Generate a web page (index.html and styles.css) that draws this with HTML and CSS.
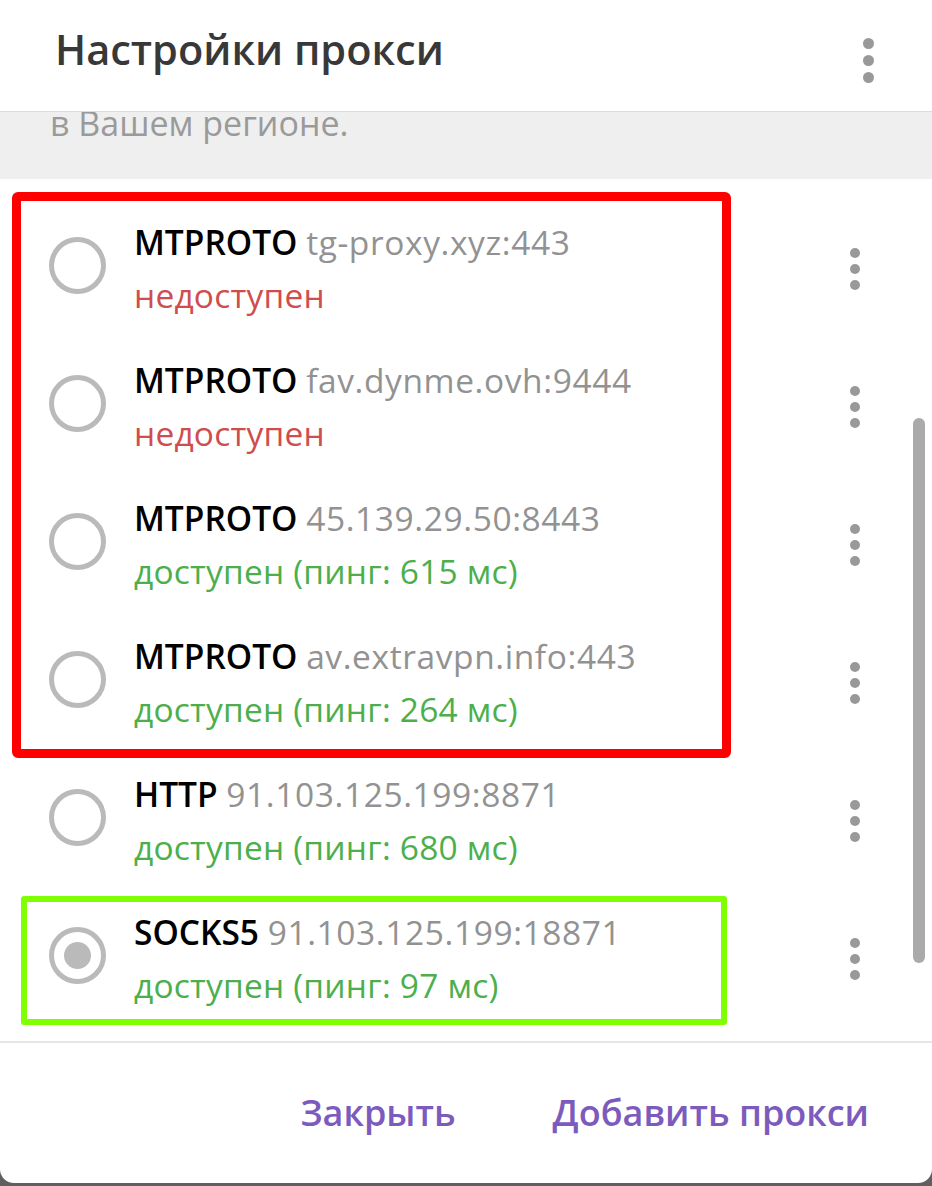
FILE: index.html
```html
<!DOCTYPE html>
<html lang="ru">
<head>
<meta charset="utf-8">
<title>Настройки прокси</title>
<link rel="stylesheet" href="styles.css">
</head>
<body>
<div class="dialog">
  <header class="header">
    <h1 class="title">Настройки прокси</h1>
    <div class="kebab kebab-header"><span></span><span></span><span></span></div>
  </header>
  <div class="note"><p>в Вашем регионе.</p></div>
  <div class="list">
    <div class="row">
      <div class="radio"></div>
      <div class="info">
        <div class="line1"><b>MTPROTO</b> <span class="addr">tg-proxy.xyz:443</span></div>
        <div class="status bad">недоступен</div>
      </div>
      <div class="kebab"><span></span><span></span><span></span></div>
    </div>
    <div class="row">
      <div class="radio"></div>
      <div class="info">
        <div class="line1"><b>MTPROTO</b> <span class="addr">fav.dynme.ovh:9444</span></div>
        <div class="status bad">недоступен</div>
      </div>
      <div class="kebab"><span></span><span></span><span></span></div>
    </div>
    <div class="row">
      <div class="radio"></div>
      <div class="info">
        <div class="line1"><b>MTPROTO</b> <span class="addr">45.139.29.50:8443</span></div>
        <div class="status ok">доступен (пинг: 615 мс)</div>
      </div>
      <div class="kebab"><span></span><span></span><span></span></div>
    </div>
    <div class="row">
      <div class="radio"></div>
      <div class="info">
        <div class="line1"><b>MTPROTO</b> <span class="addr">av.extravpn.info:443</span></div>
        <div class="status ok">доступен (пинг: 264 мс)</div>
      </div>
      <div class="kebab"><span></span><span></span><span></span></div>
    </div>
    <div class="row">
      <div class="radio"></div>
      <div class="info">
        <div class="line1"><b>HTTP</b> <span class="addr">91.103.125.199:8871</span></div>
        <div class="status ok">доступен (пинг: 680 мс)</div>
      </div>
      <div class="kebab"><span></span><span></span><span></span></div>
    </div>
    <div class="row">
      <div class="radio checked"></div>
      <div class="info">
        <div class="line1"><b>SOCKS5</b> <span class="addr">91.103.125.199:18871</span></div>
        <div class="status ok">доступен (пинг: 97 мс)</div>
      </div>
      <div class="kebab"><span></span><span></span><span></span></div>
    </div>
    <div class="mark mark-red"></div>
    <div class="mark mark-green"></div>
    <div class="scrollbar"></div>
  </div>
  <footer class="footer">
    <span class="btn">Закрыть</span>
    <span class="btn">Добавить прокси</span>
  </footer>
</div>
</body>
</html>
```
FILE: styles.css
```css
* { box-sizing: border-box; }
html, body {
  margin: 0;
  padding: 0;
}
body {
  width: 932px;
  height: 1186px;
  background: #5f5f5f;
  font-family: "Open Sans", "Noto Sans", sans-serif;
  overflow: hidden;
}
.dialog {
  width: 932px;
  height: 1183px;
  background: #fff;
  border-radius: 0 0 14px 14px;
  display: flex;
  flex-direction: column;
  overflow: hidden;
}
.header {
  height: 112px;
  flex: none;
  display: flex;
  align-items: flex-start;
  justify-content: space-between;
  padding: 21px 0 0 55px;
  border-bottom: 1px solid #dcdcdc;
  position: relative;
  z-index: 1;
  background: #fff;
}
.title {
  margin: 0;
  font-size: 41.5px;
  font-weight: 600;
  color: #383838;
  line-height: normal;
}
.kebab {
  display: flex;
  flex-direction: column;
  gap: 6px;
  align-items: center;
}
.kebab span {
  width: 10px;
  height: 10px;
  border-radius: 50%;
  background: #999;
}
.kebab-header {
  margin: 17px 58px 0 0;
}
.kebab-header span {
  width: 11px;
  height: 11px;
}
.note {
  height: 67px;
  flex: none;
  background: #efefef;
  overflow: hidden;
  padding-left: 50px;
}
.note p {
  margin: -12px 0 0;
  font-size: 34px;
  color: #9a9a9a;
  line-height: normal;
}
.list {
  flex: none;
  height: 864px;
  position: relative;
  padding: 17px 0 0;
  border-bottom: 2px solid #e6e6e6;
}
.row {
  height: 138px;
  display: flex;
  align-items: center;
  padding-left: 49px;
}
.radio {
  width: 57px;
  height: 57px;
  border-radius: 50%;
  border: 5px solid #bababa;
  flex: none;
  display: flex;
  align-items: center;
  justify-content: center;
}
.radio.checked::after {
  content: "";
  width: 27px;
  height: 27px;
  border-radius: 50%;
  background: #bababa;
}
.info {
  margin-left: 28px;
  padding-top: 8px;
  font-size: 33.5px;
  line-height: 53px;
  white-space: nowrap;
}
.line1 b {
  font-weight: 600;
  color: #000;
}
.addr {
  color: #929292;
  letter-spacing: 0.6px;
}
.status { letter-spacing: 0.2px; }
.status.bad { color: #cf4d4d; }
.status.ok { color: #4caf4c; }
.row .kebab {
  margin-left: auto;
  margin-right: 72px;
  margin-top: 8px;
}
.mark {
  position: absolute;
  pointer-events: none;
}
.mark-red {
  left: 12px;
  top: 13px;
  width: 719px;
  height: 566px;
  border: 9px solid #ff0000;
  border-radius: 6px;
}
.mark-green {
  left: 21px;
  top: 717px;
  width: 706px;
  height: 129px;
  border: 6px solid #80ff00;
  border-radius: 3px;
}
.scrollbar {
  position: absolute;
  left: 913px;
  top: 239px;
  width: 12px;
  height: 545px;
  border-radius: 6px;
  background: #aaaaaa;
}
.footer {
  flex: 1;
  display: flex;
  justify-content: flex-end;
  align-items: flex-start;
  gap: 97px;
  padding: 45px 63px 0 0;
}
.btn {
  font-size: 36px;
  font-weight: 600;
  color: #7c5bbd;
  line-height: normal;
}
```
